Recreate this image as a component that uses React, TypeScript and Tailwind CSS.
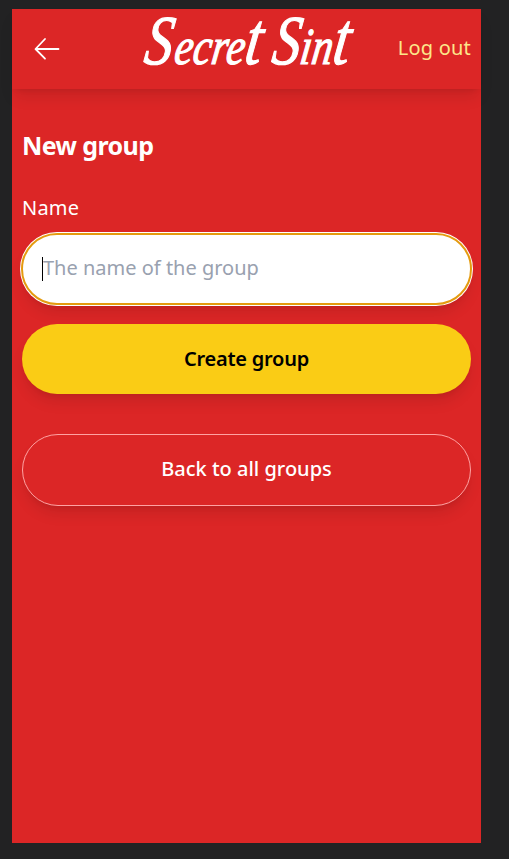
import React from "react";

function Logo() {
  return (
    <h1 className="flex h-[60px] w-[212px] items-center justify-center">
      <span className="origin-center -translate-x-[4px] -translate-y-[6px] scale-x-[0.8] -skew-x-[10deg] whitespace-nowrap font-['Liberation_Serif',serif] text-[52px] leading-[60px] italic [-webkit-text-stroke:1.2px_white]">
        <span className="mr-[3px] text-[70px]">S</span>ecre<span className="text-[75px]">t</span>
        <span className="text-[54px]"> </span>
        <span className="text-[70px]">S</span>in<span className="text-[75px]">t</span>
      </span>
    </h1>
  );
}

function Header() {
  return (
    <header className="grid h-20 shrink-0 grid-cols-[1fr_auto_1fr] items-center bg-[#dc2626] pr-[10px] pl-[22px] shadow-[0_10px_15px_-3px_rgba(0,0,0,0.1),0_4px_6px_-4px_rgba(0,0,0,0.1)]">
      <a href="#back" aria-label="Back">
        <svg width="26" height="24" viewBox="0 0 26 24" fill="none" stroke="currentColor" strokeWidth="1.8" strokeLinecap="round" strokeLinejoin="round">
          <path d="M24.5 12H1.8M11 2L1.5 12l9.5 9.7" />
        </svg>
      </a>
      <Logo />
      <a href="#logout" className="-mt-[2px] justify-self-end tracking-[0.2px] text-[#fde68a]">
        Log out
      </a>
    </header>
  );
}

export default function App() {
  return (
    <div className="h-[859px] w-full bg-[#222223] pt-[9px] pl-3 font-['Noto_Sans',sans-serif] text-[20px] leading-[30px] text-white">
      <div className="flex h-[834px] w-[469px] flex-col bg-[#dc2626]">
        <Header />
        <main className="flex flex-col px-[10px] pt-[39px]">
          <h2 className="text-[25px] leading-[35px] font-bold tracking-[-0.6px]">New group</h2>
          <label htmlFor="name" className="mt-[30px] tracking-[0.2px]">Name</label>
          <div className="-mx-px mt-[10px] flex h-[72px] items-center rounded-full border-2 border-[#e49b0f] bg-white px-[19px] shadow-[0_0_0_1px_#fff,0_10px_15px_-3px_rgba(0,0,0,0.1),0_4px_6px_-4px_rgba(0,0,0,0.1)]">
            <span className="h-6 w-px bg-black" />
            <input
              id="name"
              placeholder="The name of the group"
              className="-mt-[2px] min-w-0 flex-1 bg-transparent text-black outline-none placeholder:text-gray-400"
            />
          </div>
          <button className="mt-[19px] h-[70px] rounded-full bg-[#facc15] pb-[1px] font-semibold tracking-[-0.25px] text-black shadow-[0_10px_15px_-3px_rgba(0,0,0,0.1),0_4px_6px_-4px_rgba(0,0,0,0.1)]">
            Create group
          </button>
          <button className="mt-10 h-[72px] rounded-full border border-red-300 bg-[#dc2626] pb-[2px] font-medium shadow-[0_10px_15px_-3px_rgba(0,0,0,0.1),0_4px_6px_-4px_rgba(0,0,0,0.1)]">
            Back to all groups
          </button>
        </main>
      </div>
    </div>
  );
}
